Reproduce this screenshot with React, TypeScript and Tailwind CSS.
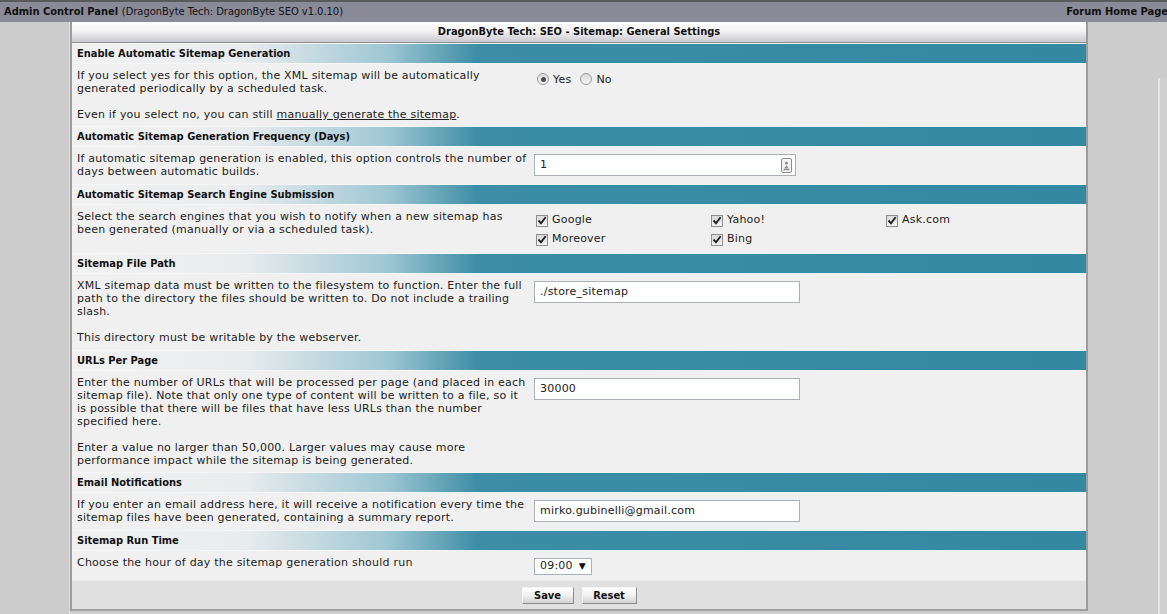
import React from "react";

const body = "font-['DejaVu_Sans',Verdana,sans-serif] tracking-[0.22px]";
const tahoma = "font-['DejaVu_Sans_Condensed','DejaVu_Sans',Tahoma,sans-serif] font-bold tracking-normal";

const Lines = ({ lines }: { lines: React.ReactNode[] }) => (
  <>
    {lines.map((l, i) => (
      <div key={i} className="h-[13px] whitespace-nowrap">
        {l === "" ? "\u00a0" : l}
      </div>
    ))}
  </>
);

const SectionHeader = ({ title }: { title: string }) => (
  <div
    className={`h-[21px] border-t border-[#f6f6f6] border-b border-[#b8b8b8] pl-[5px] pt-[1px] flex items-center text-[11px] text-[#111] ${tahoma} bg-[linear-gradient(to_right,#f1f1f1_0%,#e9ecee_17%,#9fc7d3_31%,#3d8da6_40%,#3488a1_100%)]`}
  >
    {title}
  </div>
);

const Row = ({
  lines,
  children,
  extra,
  ctl = "pt-[7px] pb-[5px]",
}: {
  lines: React.ReactNode[];
  children: React.ReactNode;
  extra?: boolean;
  ctl?: string;
}) => (
  <div className="flex bg-[#f0f0f0]">
    <div className={`w-[458px] shrink-0 pl-[5px] pt-[5px] ${extra ? "pb-[6px]" : "pb-[5px]"} leading-[13px]`}>
      <Lines lines={lines} />
    </div>
    <div className={`flex-1 pl-[4px] ${ctl}`}>{children}</div>
  </div>
);

const TextBox = ({ value, icon }: { value: string; icon?: boolean }) => (
  <div
    className={`h-[22px] ${icon ? "w-[262px]" : "w-[266px]"} bg-white border border-[#a9b0b8] flex items-center pl-[5px] pr-[3px] pt-[1px] justify-between`}
  >
    <span>{value}</span>
    {icon && (
      <svg width="11" height="15" viewBox="0 0 11 15">
        <rect x="0.5" y="0.5" width="10" height="14" rx="1.5" fill="#f2f2f2" stroke="#8c8c8c" />
        <circle cx="5.5" cy="5" r="1.5" fill="#8c8c8c" />
        <path d="M3 10.5 L5.5 7.5 L8 10.5 Z" fill="#8c8c8c" />
        <rect x="2.5" y="11" width="6" height="1.2" fill="#8c8c8c" />
      </svg>
    )}
  </div>
);

const Radio = ({ checked }: { checked?: boolean }) => (
  <span className="w-[12px] h-[12px] rounded-full border border-[#9c9c9c] bg-[linear-gradient(to_bottom,#d8d8d8,#f6f6f6)] flex items-center justify-center">
    {checked && <span className="w-[5px] h-[5px] rounded-full bg-[#4a4a4a]" />}
  </span>
);

const Check = ({ label }: { label: string }) => (
  <div className="h-[19px] flex items-center gap-[4px]">
    <span className="w-[12px] h-[12px] border border-[#8e8e8e] bg-[linear-gradient(to_bottom,#d9d9d9,#f3f3f3)] flex items-center justify-center">
      <svg width="10" height="9" viewBox="0 0 10 9">
        <path d="M1.5 4.5 L4 7.3 L8.6 1.2" fill="none" stroke="#222" strokeWidth="1.9" />
      </svg>
    </span>
    <span>{label}</span>
  </div>
);

const Button = ({ label, w }: { label: string; w: string }) => (
  <button
    className={`${w} h-[17px] ${tahoma} text-[11px] text-[#111] bg-[linear-gradient(to_bottom,#ffffff,#f2f2f2_45%,#d2d2d2)] border-t border-l border-[#f4f4f4] border-r border-b border-r-[#8c8c8c] border-b-[#8c8c8c] leading-none`}
  >
    {label}
  </button>
);

export default function App() {
  return (
    <div className={`w-[1167px] h-[614px] overflow-hidden bg-[#cccccc] text-[11px] text-[#222] ${body}`}>
      {/* top bar */}
      <div className="h-[22px] border-t-2 border-[#5a5a5a] bg-[#8b8a99] flex items-center justify-between pl-[4px] pt-[1px] text-[#111]">
        <div className="whitespace-nowrap">
          <span className={tahoma}>Admin Control Panel</span>{" "}
          <span className="font-['DejaVu_Sans_Condensed','DejaVu_Sans',sans-serif] tracking-normal text-[11px]">
            (DragonByte Tech: DragonByte SEO v1.0.10)
          </span>
        </div>
        <span className={`${tahoma} whitespace-nowrap mr-[-1px]`}>Forum Home Page</span>
      </div>

      <div className="flex h-[592px]">
        <div className="w-[70px] shrink-0 bg-[#cccccc] border-r border-[#e0e0e0]" />

        {/* settings panel */}
        <div className="w-[1018px] shrink-0 self-start border-l-2 border-r-2 border-[#9b9b9b] bg-[#f0f0f0]">
          <div
            className={`h-[21px] border-b border-[#8e8e8e] flex items-center justify-center text-[11px] text-[#111] ${tahoma} bg-[linear-gradient(to_bottom,#ffffff,#f3f3f5_45%,#c9c9cf)]`}
          >
            DragonByte Tech: SEO - Sitemap: General Settings
          </div>

          <SectionHeader title="Enable Automatic Sitemap Generation" />
          <Row
            lines={[
              "If you select yes for this option, the XML sitemap will be automatically",
              "generated periodically by a scheduled task.",
              "",
              <>
                Even if you select no, you can still{" "}
                <a className="underline">manually generate the sitemap</a>.
              </>,
            ]}
          >
            <div className="flex items-center h-[16px] pl-[3px]">
              <Radio checked />
              <span className="ml-[4px] mt-[3px]">Yes</span>
              <span className="ml-[9px]">
                <Radio />
              </span>
              <span className="ml-[4px] mt-[3px]">No</span>
            </div>
          </Row>

          <SectionHeader title="Automatic Sitemap Generation Frequency (Days)" />
          <Row
            extra
            lines={[
              "If automatic sitemap generation is enabled, this option controls the number of",
              "days between automatic builds.",
            ]}
          >
            <TextBox value="1" icon />
          </Row>

          <SectionHeader title="Automatic Sitemap Search Engine Submission" />
          <Row
            ctl="pt-[6px] pb-[4px]"
            lines={[
              "Select the search engines that you wish to notify when a new sitemap has",
              "been generated (manually or via a scheduled task).",
            ]}
          >
            <div className="grid grid-cols-[175px_175px_175px] pl-[2px]">
              <Check label="Google" />
              <Check label="Yahoo!" />
              <Check label="Ask.com" />
              <Check label="Moreover" />
              <Check label="Bing" />
            </div>
          </Row>

          <SectionHeader title="Sitemap File Path" />
          <Row
            extra
            lines={[
              "XML sitemap data must be written to the filesystem to function. Enter the full",
              "path to the directory the files should be written to. Do not include a trailing",
              "slash.",
              "",
              "This directory must be writable by the webserver.",
            ]}
          >
            <TextBox value="./store_sitemap" />
          </Row>

          <SectionHeader title="URLs Per Page" />
          <Row
            lines={[
              "Enter the number of URLs that will be processed per page (and placed in each",
              "sitemap file). Note that only one type of content will be written to a file, so it",
              "is possible that there will be files that have less URLs than the number",
              "specified here.",
              "",
              "Enter a value no larger than 50,000. Larger values may cause more",
              "performance impact while the sitemap is being generated.",
            ]}
          >
            <TextBox value="30000" />
          </Row>

          <SectionHeader title="Email Notifications" />
          <Row
            extra
            lines={[
              "If you enter an email address here, it will receive a notification every time the",
              "sitemap files have been generated, containing a summary report.",
            ]}
          >
            <TextBox value="mirko.gubinelli@gmail.com" />
          </Row>

          <SectionHeader title="Sitemap Run Time" />
          <Row lines={["Choose the hour of day the sitemap generation should run"]}>
            <div className="w-[58px] h-[17px] bg-white border border-[#a9b0b8] flex items-center justify-between pl-[5px] pr-[5px]">
              <span>09:00</span>
              <span className="text-[9px] text-[#111]">▼</span>
            </div>
          </Row>

          <div className="h-[31px] bg-[#e0e0e0] border-t border-[#e9e9e9] border-b-2 border-b-[#a0a0a0] flex items-center justify-center gap-[8px]">
            <Button label="Save" w="w-[52px]" />
            <Button label="Reset" w="w-[55px]" />
          </div>
        </div>

        <div className="flex-1 flex">
          <div className="w-[70px] shrink-0" />
          <div className="flex-1 mt-[56px] border-l-2 border-[#e6e6e6] bg-[#d0d0d0]" />
        </div>
      </div>
    </div>
  );
}
